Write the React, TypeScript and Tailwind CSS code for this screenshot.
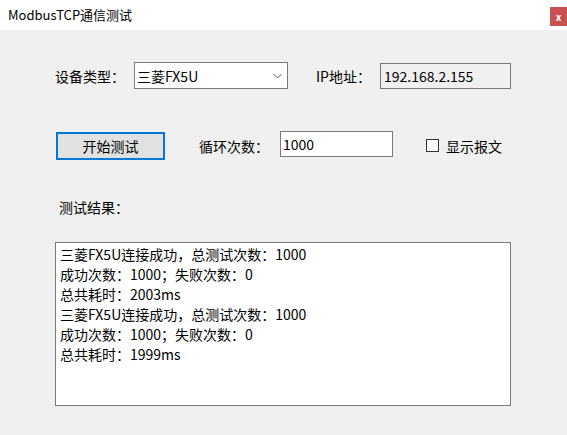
import { useState } from "react";

// 测试结果的文本行
const resultLines = [
  "三菱FX5U连接成功，总测试次数：1000",
  "成功次数：1000；失败次数：0",
  "总共耗时：2003ms",
  "三菱FX5U连接成功，总测试次数：1000",
  "成功次数：1000；失败次数：0",
  "总共耗时：1999ms",
];

const font = { fontFamily: '"Noto Sans CJK SC", "Noto Sans", sans-serif' };

const App = () => {
  const [count, setCount] = useState("1000");
  const [showMsg, setShowMsg] = useState(false);

  return (
    <div
      className="w-[567px] h-[435px] flex flex-col bg-[#f0f0f0] text-black overflow-hidden"
      style={font}
    >
      {/* 标题栏 */}
      <header className="h-[30px] bg-white flex items-start shrink-0">
        <span className="pl-[8px] pt-[6px] text-[13px] leading-[18px]">ModbusTCP通信测试</span>
        <button
          type="button"
          className="ml-auto mt-[7px] w-[17px] h-[19px] bg-[#c75050] text-white text-[10px] font-bold leading-[19px] flex items-center justify-center"
        >
          x
        </button>
      </header>

      <section className="flex flex-col text-[14px]">
        {/* 设备类型 / IP */}
        <div className="mt-[32px] h-[27px] flex items-center">
          <span className="pl-[55px] w-[134px] leading-[20px]">设备类型：</span>
          <div className="w-[154px] h-[27px] bg-white border border-[#7a7a7a] flex items-center pl-[2px] pr-[5px]">
            <span className="leading-[20px]">三菱FX5U</span>
            <svg className="ml-auto" width="9" height="6" viewBox="0 0 9 6">
              <path d="M0.5 1 L4.5 5 L8.5 1" fill="none" stroke="#555" strokeWidth="1" />
            </svg>
          </div>
          <span className="ml-[28px] w-[64px] leading-[20px]">IP地址：</span>
          <div className="w-[131px] h-[26px] border border-[#7a7a7a] bg-[#f0f0f0] flex items-center pl-[3px]">
            <span className="leading-[20px]">192.168.2.155</span>
          </div>
        </div>

        {/* 开始测试 / 循环次数 / 显示报文 */}
        <div className="mt-[42px] h-[29px] flex items-center">
          <button
            type="button"
            className="self-end ml-[56px] w-[109px] h-[28px] bg-[#e1e1e1] border-2 border-[#0078d7] leading-[20px]"
          >
            开始测试
          </button>
          <span className="ml-[34px] w-[81px] leading-[20px]">循环次数：</span>
          <input
            className="self-start w-[113px] h-[26px] bg-white border border-[#7a7a7a] pl-[2px] outline-none leading-[20px]"
            value={count}
            onChange={(e) => setCount(e.target.value)}
          />
          <label className="ml-[33px] flex items-center cursor-pointer">
            <span
              className="w-[13px] h-[13px] bg-white border border-[#333] flex items-center justify-center"
              onClick={() => setShowMsg(!showMsg)}
            >
              {showMsg && (
                <svg width="9" height="9" viewBox="0 0 9 9">
                  <path d="M1 4.5 L3.5 7 L8 1.5" fill="none" stroke="#333" strokeWidth="1.4" />
                </svg>
              )}
            </span>
            <span className="ml-[7px] leading-[20px]">显示报文</span>
          </label>
        </div>

        {/* 测试结果 */}
        <span className="mt-[37px] pl-[59px] leading-[20px]">测试结果：</span>

        <div className="mt-[25px] ml-[55px] w-[456px] h-[164px] bg-white border border-[#7a7a7a] pt-[1px] pl-[4px]">
          {resultLines.map((line, i) => (
            <div key={i} className="leading-[20px] whitespace-nowrap">
              {line}
            </div>
          ))}
        </div>
      </section>
    </div>
  );
};

export default App;
